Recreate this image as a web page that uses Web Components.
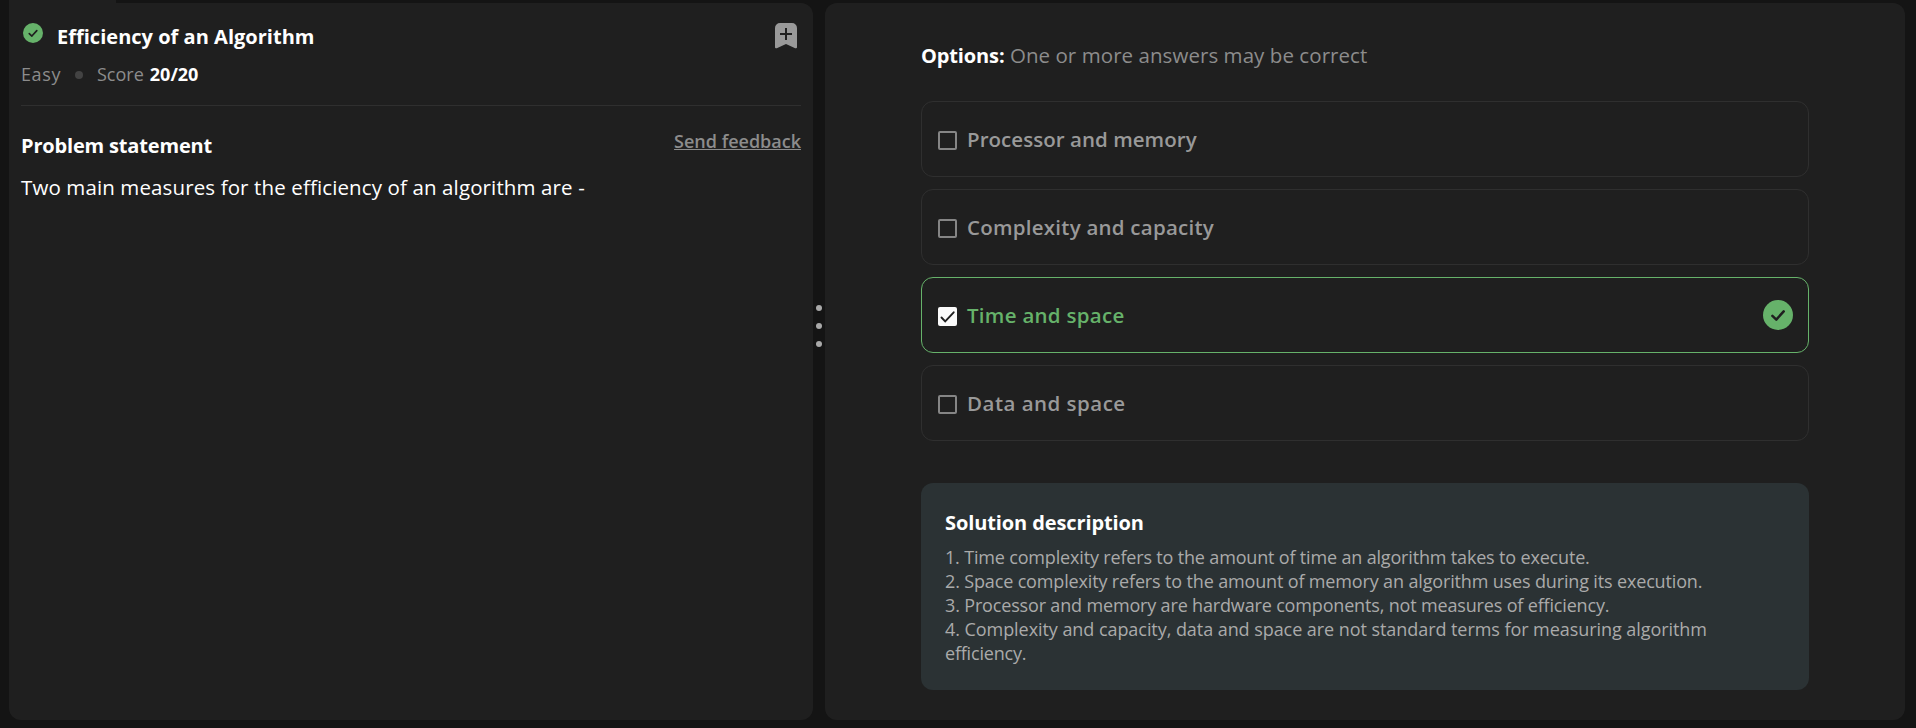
<!DOCTYPE html>
<html lang="en">
<head>
<meta charset="utf-8">
<title>Efficiency of an Algorithm</title>
<style>
html,body{margin:0;height:100%;background:#141414}
body{font:400 20px/24px "Open Sans","Noto Sans",sans-serif;color:#fff;overflow:hidden}
</style>
</head>
<body>
<quiz-page></quiz-page>
<script>
const define = (name, html) => {
  const t = document.createElement('template');
  t.innerHTML = html;
  customElements.define(name, class extends HTMLElement {
    constructor() {
      super();
      this.attachShadow({mode: 'open'}).append(t.content.cloneNode(true));
    }
  });
};

define('status-badge', `
<style>
:host{display:block;width:20px;height:20px;flex:none}
svg{display:block;width:100%;height:100%}
</style>
<svg viewBox="0 0 30 30"><circle cx="15" cy="15" r="15" fill="#66b26a"/><path d="M9.400 15.900l3.900 3.700 7.400-8.200" fill="none" stroke="#1f1f1f" stroke-width="2.500" stroke-linecap="round" stroke-linejoin="round"/></svg>`);

define('bookmark-button', `
<style>:host{display:block;width:22px;height:26px;flex:none}svg{display:block}</style>
<svg width="22" height="26" viewBox="0 0 22 26"><path d="M5 0h12a5 5 0 0 1 5 5v19.200q0 1.600-1.800 1L11 21 1.800 25.200Q0 25.800 0 24.200V5a5 5 0 0 1 5-5z" fill="#999"/><path d="M11 5v12M5 11h12" stroke="#1f1f1f" stroke-width="2"/></svg>`);

define('check-box', `
<style>
:host{display:block;box-sizing:border-box;width:19px;height:19px;border:2px solid #858585;border-radius:2px;flex:none}
svg{display:none}
:host([checked]){border:0;background:#fafafa}
:host([checked]) svg{display:block}
</style>
<svg width="19" height="19" viewBox="0 0 19 19"><path d="M3.500 10.500l3.700 3.800L15.700 5.300" fill="none" stroke="#1f1f1f" stroke-width="1.900" stroke-linecap="round"/></svg>`);

define('answer-option', `
<style>
:host{box-sizing:border-box;display:flex;align-items:center;height:76px;padding:0 15px 0 16px;border:1px solid #2f2f2f;border-radius:12px;font-size:20.500px;font-weight:600;color:#999}
:host([correct]){border-color:#66b26a;color:#66b26a}
.label{flex:1}
</style>
<slot name="box"></slot><span class="label"><slot></slot></span><slot name="badge"></slot>`);

define('problem-panel', `
<style>
:host{box-sizing:border-box;display:block;background:#1f1f1f;border-radius:0 12px 12px 12px;padding:20px 12px 0}
.title{display:flex;height:35px}
.title status-badge{margin:0 14px 0 2px}
h1,h2,p{margin:0;font-size:20px;line-height:24px}
h1{flex:1;padding-top:2px;font-weight:700;letter-spacing:.02px}
bookmark-button{margin-right:4px}
.meta{display:flex;align-items:center;height:24px;margin-top:4px;font-size:18px;color:#8c8c8c}
.dot{width:8px;height:8px;border-radius:50%;background:#434343;margin:1px 14px 0}
.meta b{color:#fff;margin-left:6px}
hr{margin:19px 0 0;border:0;height:1px;background:#2f2f2f}
.head{display:flex;justify-content:space-between;padding-top:23px}
h2{padding-top:5px;letter-spacing:-.17px}
a{font-size:18px;font-weight:600;color:#8c8c8c;text-decoration:underline 1px;text-underline-offset:1px;text-decoration-skip-ink:none}
p{margin-top:17px;font-size:20.500px;letter-spacing:.12px}
</style>
<div class="title"><status-badge></status-badge><h1>Efficiency of an Algorithm</h1><bookmark-button></bookmark-button></div>
<div class="meta"><span style="letter-spacing:.6px">Easy</span><i class="dot"></i><span>Score</span><b>20/20</b></div>
<hr>
<div class="head"><h2>Problem statement</h2><a>Send feedback</a></div>
<p>Two main measures for the efficiency of an algorithm are -</p>`);

define('pane-divider', `
<style>
:host{display:flex;flex-direction:column;align-items:center;gap:12px;padding-top:302px}
i{width:6px;height:6px;border-radius:50%;background:#a9a9a9}
</style><i></i><i></i><i></i>`);

define('solution-box', `
<style>
:host{box-sizing:border-box;display:block;height:207px;padding:28px 24px 0;border-radius:12px;background:#2b3234}
h2{margin:0 0 10px;font-size:20px;line-height:24px;font-weight:700;letter-spacing:-.11px}
div{font-size:18px;color:#aaa;white-space:nowrap}
</style>
<h2>Solution description</h2>
<div style="letter-spacing:-.168px">1. Time complexity refers to the amount of time an algorithm takes to execute.</div>
<div style="letter-spacing:-.15px">2. Space complexity refers to the amount of memory an algorithm uses during its execution.</div>
<div style="letter-spacing:-.162px">3. Processor and memory are hardware components, not measures of efficiency.</div>
<div style="letter-spacing:-.06px">4. Complexity and capacity, data and space are not standard terms for measuring algorithm</div>
<div style="letter-spacing:-.2px">efficiency.</div>`);

define('answer-panel', `
<style>
:host{box-sizing:border-box;display:block;background:#1f1f1f;border-radius:12px;padding:40px 96px 0}
.lead{height:24px;font-size:20.500px;color:#8c8c8c;letter-spacing:.06px}
.lead b{font-size:20px;color:#fff;letter-spacing:-.13px}
.list{display:grid;gap:12px;margin:34px 0 42px}
check-box{margin:3px 10px 0 0}
status-badge{width:30px;height:30px}
</style>
<div class="lead"><b>Options:</b> One or more answers may be correct</div>
<div class="list">
<answer-option style="letter-spacing:.04px"><check-box slot="box"></check-box>Processor and memory</answer-option>
<answer-option style="letter-spacing:.24px"><check-box slot="box"></check-box>Complexity and capacity</answer-option>
<answer-option correct style="letter-spacing:.28px"><check-box slot="box" checked></check-box>Time and space<status-badge slot="badge"></status-badge></answer-option>
<answer-option style="letter-spacing:.48px"><check-box slot="box"></check-box>Data and space</answer-option>
</div>
<solution-box></solution-box>`);

define('quiz-page', `
<style>
:host{box-sizing:border-box;display:grid;grid-template-columns:804px 12px 1080px;grid-template-rows:3px 717px;height:728px;padding-left:9px}
.tab{grid-column:1/-1;width:107px;background:#1f1f1f}
</style>
<div class="tab"></div>
<problem-panel></problem-panel><pane-divider></pane-divider><answer-panel></answer-panel>`);
</script>
</body>
</html>
